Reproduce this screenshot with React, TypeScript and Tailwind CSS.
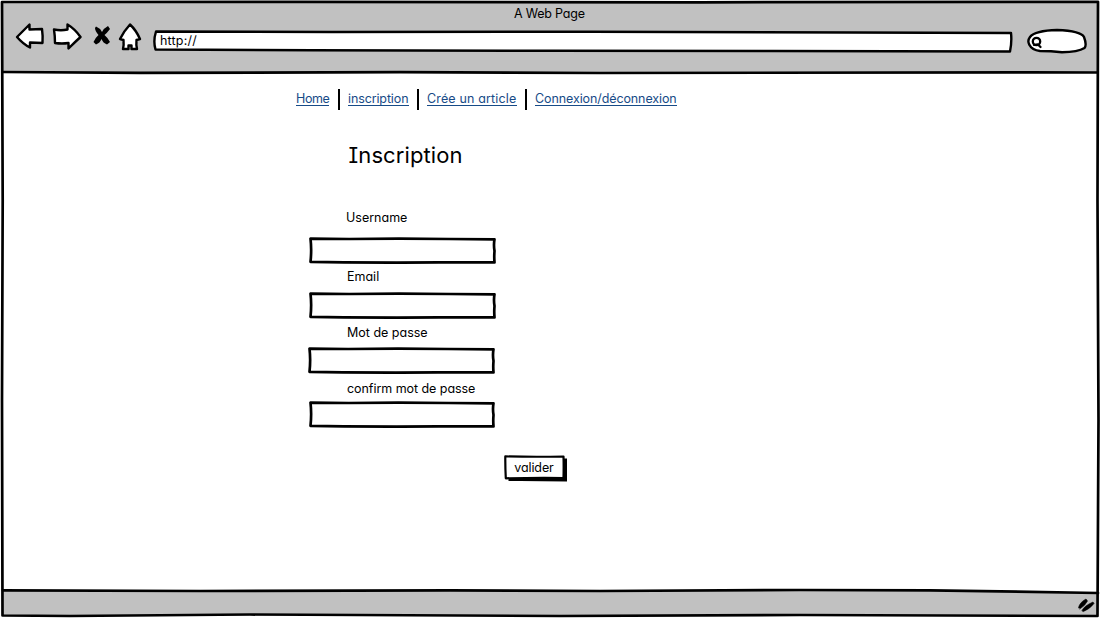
import type { ReactNode } from "react";

const LINKS = [
  { text: "Home", cls: "w-[33px] mr-px tracking-[-0.4px]" },
  { text: "inscription", cls: "w-[61px] tracking-[-0.12px]" },
  { text: "Crée un article", cls: "w-[90px] tracking-[0.15px]" },
  { text: "Connexion/déconnexion", cls: "w-[142px] tracking-[-0.1px]" },
];

const FIELDS = [
  { label: "Username", type: "text", row: "h-[59px]", text: "pl-[37px]", box: "mt-[10px] w-[187px]" },
  { label: "Email", type: "email", row: "h-[56px]", text: "pl-[38px]", box: "mt-[6px] w-[187px]" },
  { label: "Mot de passe", type: "password", row: "h-[56px]", text: "pl-[38px]", box: "mt-[5px] -ml-px w-[187px]" },
  { label: "confirm mot de passe", type: "password", row: "h-[50px]", text: "pl-[38px] tracking-[-0.05px]", box: "mt-[3px] w-[186px]" },
];

function Sketch({ box, className, children }: { box: string; className: string; children: ReactNode }) {
  return (
    <svg
      viewBox={box}
      preserveAspectRatio="none"
      className={className}
      fill="none"
      stroke="#000"
      strokeWidth="2.7"
      strokeLinejoin="round"
      strokeLinecap="round"
      aria-hidden="true"
    >
      {children}
    </svg>
  );
}

function Toolbar() {
  return (
    <div className="flex h-[51px] pl-[13px]">
      <button className="mt-[1px] h-[28px] w-[30px]" aria-label="Back">
        <Sketch box="0 0 30 28" className="block h-[28px] w-[30px]">
          <path d="M2 15 14.5 2.5V7.5L27 7Q28 14 27.5 21L15 20.5V25.5Q8 22 2 15Z" fill="#fff" strokeWidth="2.4" />
        </Sketch>
      </button>
      <button className="mt-[1px] ml-[7px] h-[28px] w-[31px]" aria-label="Forward">
        <Sketch box="0 0 31 28" className="block h-[28px] w-[31px]">
          <path d="M2 7.5Q9 9 15.5 7.5V2.5Q23 7 28.5 15Q23 20 16.5 26.5V21Q10 22 3 21Q3 14 2 7.5Z" fill="#fff" strokeWidth="2.4" />
        </Sketch>
      </button>
      <button className="mt-[4px] ml-[10px] h-[21px] w-[18px]" aria-label="Stop">
        <Sketch box="0 0 18 21" className="block h-[21px] w-[18px]">
          <path d="M3 1.5Q7 3 9 7Q11 3 15 1L17 4Q14 8 11.5 10Q15 13 17 17L14 19.5Q10 18 8.5 14Q7 18 3 19.5L0.5 17Q3 12 5.5 10Q2 6 2 3Z" fill="#000" stroke="none" />
        </Sketch>
      </button>
      <button className="mt-[0.5px] ml-[7px] h-[30px] w-[24px]" aria-label="Home page">
        <Sketch box="0 0 24 30" className="block h-[30px] w-[24px]">
          <path d="M12 2.5Q6 9 2 17L5.5 18Q6 23 5 27H10.5V23.5H13.5V27H19Q18 23 18.5 18L22 17Q18 8 12 2.5Z" fill="#fff" strokeWidth="2.4" />
        </Sketch>
      </button>
      <div className="relative mt-[9px] ml-[10px] h-[23px] w-[861px]">
        <Sketch box="0 0 861 23" className="absolute inset-0 h-[23px] w-[861px]">
          <path d="M4 1.5 180 2 440 1.7 700 2.5 859 3Q860 12 858 21.5L620 21 400 20.8 160 20.2 3.5 19.5Q1 11 4 1.5Z" fill="#fff" strokeWidth="2.4" />
        </Sketch>
        <span className="relative block pl-[8px] text-[12.5px] leading-[21px] tracking-[0.2px]">http://</span>
      </div>
      <Sketch box="0 0 62 26" className="mt-[7px] ml-[13px] h-[26px] w-[62px]">
        <path d="M4 9Q9 2.500 31 2Q55 3 58 9Q61 17 58.500 20Q52 24 36 24.300Q25 23 14 23Q6 22 3.500 17Q1 13 4 9Z" fill="#fff" strokeWidth="2.4" />
        <circle cx="10.5" cy="13.5" r="3.7" strokeWidth="2.3" />
        <path d="M8 16.800 12 16.500 14.500 19" strokeWidth="2.300" />
      </Sketch>
    </div>
  );
}

export default function App() {
  return (
    <div className="relative flex h-[618px] w-[1100px] flex-col overflow-hidden bg-white px-[2px] pt-[2px] font-['Inter',sans-serif] text-[12.5px] leading-[18px] text-black [font-feature-settings:'cv08','cv11']">
      <header className="h-[70px] shrink-0 bg-[#c1c1c1]">
        <h1 className="h-[19px] pt-[3px] pl-[512px] tracking-[-0.2px] whitespace-nowrap">A Web Page</h1>
        <Toolbar />
      </header>

      <main className="flex-1 pt-[17px]">
        <nav className="flex h-[21px] pl-[294px] text-[#174b87]">
          {LINKS.map((link, i) => (
            <div key={link.text} className="flex">
              {i > 0 && <span className="mr-[8px] ml-[8px] h-[21px] w-[2px] bg-black" />}
              <a href="#" className={`h-[17px] border-b border-[#174b87] leading-[19px] whitespace-nowrap ${link.cls}`}>
                {link.text}
              </a>
            </div>
          ))}
        </nav>

        <h2 className="mt-[29px] pl-[346.5px] text-[22px] leading-[32px] tracking-[0.1px]">Inscription</h2>

        <form className="mt-[38px] pl-[307px]">
          {FIELDS.map((f) => (
            <label key={f.label} className={`block ${f.row}`}>
              <span className={`block h-[18px] whitespace-nowrap ${f.text}`}>{f.label}</span>
              <span className={`relative block h-[27px] ${f.box}`}>
                <Sketch box="0 0 187 27" className="absolute inset-0 h-full w-full">
                  <path d="M1.5 1.6 40 2 90 1.7 140 2 185.500 2.300Q184.500 8 185.500 14Q185 20 185.500 25.300L130 25.300 88 25.700 35 25.300 1.500 24.800Q2.800 13 1.500 1.600Z" fill="#fff" />
                </Sketch>
                <input type={f.type} aria-label={f.label} className="relative block h-full w-full bg-transparent px-2 outline-none" />
              </span>
            </label>
          ))}
          <button type="button" className="relative mt-[25px] ml-[195px] block h-[28px] w-[64px]">
            <Sketch box="0 0 64 28" className="absolute inset-0 h-[28px] w-[64px]">
              <path d="M4.500 4 63 3.500V26.500Q30 25.800 4.500 26Z" fill="#000" stroke="none" />
              <path d="M1.300 1.400Q30 2 59.500 1.500Q59.800 12 59.500 23Q30 22.700 1.800 23.300Q1.200 12 1.300 1.400Z" fill="#fff" strokeWidth="2.200" />
            </Sketch>
            <span className="relative -mt-[2px] block pr-[4px] tracking-[-0.1px]">valider</span>
          </button>
        </form>
      </main>

      <footer className="relative h-[28px] shrink-0">
        <Sketch box="0 0 1098 28" className="block h-[28px] w-[1098px]">
          <path d="M0 0.5H500L900 0.5 1096 3V25.5H0Z" fill="#c1c1c1" stroke="none" />
          <path d="M1076.500 17.500Q1078 12 1084 9L1085.500 11Q1083 16 1078 18.800ZM1080 20.500Q1082 16 1091 12L1092 13.500Q1088 19 1081.500 21.500Z" fill="#000" strokeWidth="0.600" />
        </Sketch>
      </footer>

      <Sketch box="0 0 1100 618" className="pointer-events-none absolute inset-0 h-[618px] w-[1100px]">
        <path d="M2 2 300 1.8 700 2.3 1098 1.8 1097.5 200 1098.5 420 1097.5 616 800 615 560 616 250 614.5 70 616 2.5 615.5 2 400 2.7 200Z" />
        <path d="M3 72 140 72.8 400 72.2 600 73 1030 72.3 1097 72.5" />
        <path d="M3 590.3 200 591 450 590.3 600 591 800 590 930 590.3 1098 593" />
      </Sketch>
    </div>
  );
}
